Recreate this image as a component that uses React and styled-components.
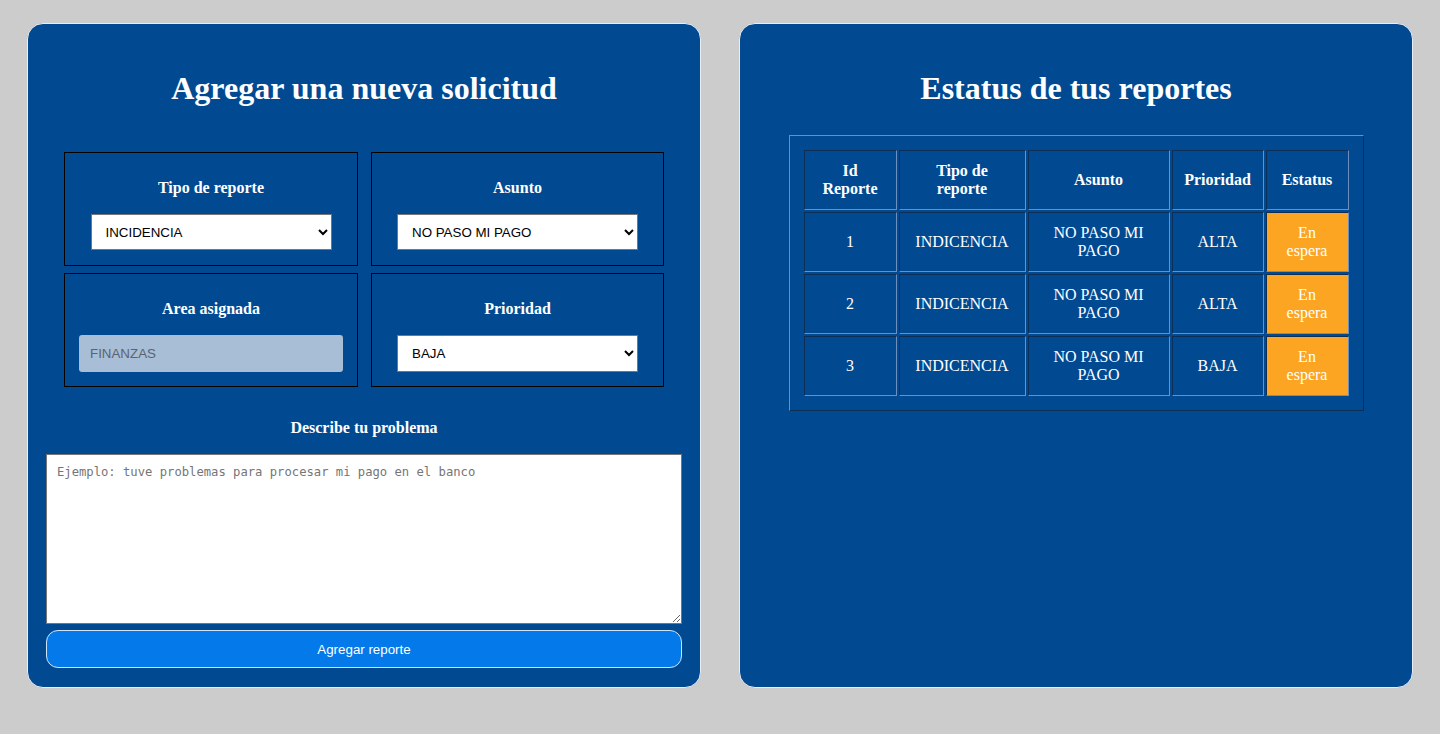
import React from 'react';
import styled, { createGlobalStyle } from 'styled-components';

const GlobalStyle = createGlobalStyle`
  html, body {
    margin: 0;
    padding: 0;
    background-color: #cccccc;
  }
  body {
    font-family: "Liberation Serif", "Times New Roman", serif;
  }
`;

const Page = styled.div`
  display: flex;
  gap: 38px;
  padding: 23px 0 0 27px;
  height: 734px;
  box-sizing: border-box;
`;

const Panel = styled.div`
  flex-shrink: 0;
  width: 674px;
  height: 665px;
  box-sizing: border-box;
  background-color: #014a92;
  border: 1px solid #e8eef6;
  border-radius: 16px;
  padding: 0 18px;
  display: flex;
  flex-direction: column;
  align-items: center;
`;

const Title = styled.h1`
  margin: 46px 0 0 0;
  font-size: 32px;
  font-weight: bold;
  color: #fff;
  line-height: 37px;
  text-align: center;
`;

const FieldGrid = styled.div`
  margin-top: 45px;
  display: grid;
  grid-template-columns: 294px 293px;
  column-gap: 13px;
  row-gap: 7px;
`;

const FieldBox = styled.div`
  height: 114px;
  box-sizing: border-box;
  border: 1px solid #000;
  display: flex;
  flex-direction: column;
  align-items: center;
  padding-top: 26px;
`;

const Label = styled.label`
  font-size: 16px;
  font-weight: bold;
  color: #fff;
  line-height: 18px;
  display: block;
  text-align: center;
`;

const Select = styled.select`
  margin-top: 17px;
  width: 241px;
  height: ${(p) => p.$h || 36}px;
  box-sizing: border-box;
  font-family: "Liberation Sans", Arial, sans-serif;
  font-size: 13.33px;
  color: #000;
  background: #fff;
  border: 1px solid #767676;
  border-radius: 0;
  padding: 0 8px 0 10px;
`;

const ReadOnlyInput = styled.input`
  margin-top: 17px;
  width: 264px;
  height: 37px;
  box-sizing: border-box;
  border: none;
  border-radius: 3px;
  background: #a8bdd6;
  font-family: "Liberation Sans", Arial, sans-serif;
  font-size: 13.33px;
  padding: 0 11px;
  &::placeholder {
    color: #5a6470;
  }
`;

const DescribeLabel = styled(Label)`
  margin-top: 32px;
`;

const TextArea = styled.textarea`
  margin-top: 17px;
  width: 636px;
  height: 170px;
  box-sizing: border-box;
  border: 1px solid #767676;
  padding: 10px;
  font-family: "DejaVu Sans Mono", "Liberation Mono", monospace;
  font-size: 12.2px;
  resize: vertical;
  &::placeholder {
    color: #757575;
  }
`;

const SubmitButton = styled.button`
  margin-top: 6px;
  width: 636px;
  height: 38px;
  box-sizing: border-box;
  background-color: #0479ea;
  color: #fff;
  border: 1px solid #cfe4fb;
  border-radius: 12px;
  font-family: "Liberation Sans", Arial, sans-serif;
  font-size: 13.33px;
  cursor: pointer;
`;

const Table = styled.table`
  margin-top: 28px;
  width: 575px;
  border-collapse: separate;
  border-spacing: 2px;
  padding: 12px;
  border-style: solid;
  border-width: 1px;
  border-color: #6b8fbf #0d2f55 #0d2f55 #6b8fbf;
  color: #fff;
  table-layout: fixed;
`;

const Cell = styled.td`
  border-style: solid;
  border-width: 1px;
  border-color: #0d2f55 #6b8fbf #6b8fbf #0d2f55;
  padding: 0 10px;
  height: 58px;
  text-align: center;
  font-size: 16px;
  line-height: 18px;
  background: ${(p) => (p.$status ? '#fba522' : 'transparent')};
`;

const HeadCell = styled(Cell).attrs({ as: 'th' })`
  font-weight: bold;
`;

const columns = [
  { key: 'id', label: ['Id', 'Reporte'], width: 93 },
  { key: 'tipo', label: ['Tipo de', 'reporte'], width: 127 },
  { key: 'asunto', label: ['Asunto'], width: 142 },
  { key: 'prioridad', label: ['Prioridad'], width: 92 },
  { key: 'estatus', label: ['Estatus'], width: 83 },
];

const reportes = [
  { id: 1, tipo: 'INDICENCIA', asunto: 'NO PASO MI PAGO', prioridad: 'ALTA', estatus: 'En espera' },
  { id: 2, tipo: 'INDICENCIA', asunto: 'NO PASO MI PAGO', prioridad: 'ALTA', estatus: 'En espera' },
  { id: 3, tipo: 'INDICENCIA', asunto: 'NO PASO MI PAGO', prioridad: 'BAJA', estatus: 'En espera' },
];

export default function App() {
  return (
    <>
      <GlobalStyle />
      <Page>
        <Panel>
          <Title>Agregar una nueva solicitud</Title>
          <FieldGrid>
            <FieldBox>
              <Label>Tipo de reporte</Label>
              <Select defaultValue="INCIDENCIA">
                <option>INCIDENCIA</option>
                <option>SOLICITUD</option>
              </Select>
            </FieldBox>
            <FieldBox>
              <Label>Asunto</Label>
              <Select defaultValue="NO PASO MI PAGO">
                <option>NO PASO MI PAGO</option>
                <option>OTRO</option>
              </Select>
            </FieldBox>
            <FieldBox>
              <Label>Area asignada</Label>
              <ReadOnlyInput placeholder="FINANZAS" disabled />
            </FieldBox>
            <FieldBox>
              <Label>Prioridad</Label>
              <Select $h={37} defaultValue="BAJA">
                <option>BAJA</option>
                <option>MEDIA</option>
                <option>ALTA</option>
              </Select>
            </FieldBox>
          </FieldGrid>
          <DescribeLabel>Describe tu problema</DescribeLabel>
          <TextArea placeholder="Ejemplo: tuve problemas para procesar mi pago en el banco" />
          <SubmitButton>Agregar reporte</SubmitButton>
        </Panel>
        <Panel>
          <Title>Estatus de tus reportes</Title>
          <Table>
            <colgroup>
              {columns.map((c) => (
                <col key={c.key} style={{ width: c.width }} />
              ))}
            </colgroup>
            <thead>
              <tr>
                {columns.map((c) => (
                  <HeadCell key={c.key}>
                    {c.label.map((part, i) => (
                      <React.Fragment key={part}>
                        {i > 0 && <br />}
                        {part}
                      </React.Fragment>
                    ))}
                  </HeadCell>
                ))}
              </tr>
            </thead>
            <tbody>
              {reportes.map((r) => (
                <tr key={r.id}>
                  <Cell>{r.id}</Cell>
                  <Cell>{r.tipo}</Cell>
                  <Cell>{r.asunto}</Cell>
                  <Cell>{r.prioridad}</Cell>
                  <Cell $status>{r.estatus}</Cell>
                </tr>
              ))}
            </tbody>
          </Table>
        </Panel>
      </Page>
    </>
  );
}
